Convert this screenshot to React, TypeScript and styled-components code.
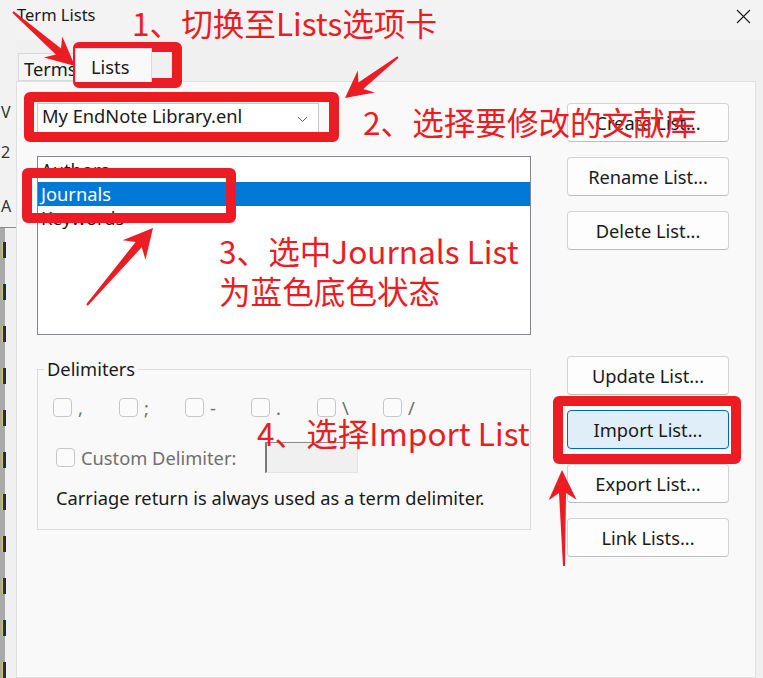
import React from 'react';
import styled, { createGlobalStyle } from 'styled-components';

const UI_FONT = `"Noto Sans", "Segoe UI", sans-serif`;
const CJK_FONT = `"Noto Sans CJK SC", "Noto Sans", sans-serif`;
const RED = '#ec1c24';
const FS = '18.3px';

const Global = createGlobalStyle`
  html, body { margin: 0; padding: 0; background: #f0f0f0; }
  body { font-family: ${UI_FONT}; color: #1a1a1a; }
  * { box-sizing: border-box; }
`;

const Screen = styled.div`
  position: relative;
  width: 763px;
  height: 678px;
  overflow: hidden;
  display: flex;
  background: #f0f0f0;
`;

const BehindStrip = styled.div`
  width: 16px;
  flex: none;
  display: flex;
  flex-direction: column;
`;

const StripTop = styled.div`
  height: 237px;
  background: #f2f2f2;
  border-bottom: 1px solid #8c8c8c;
  display: flex;
  flex-direction: column;
  padding: 104px 0 0 1px;
  overflow: hidden;
`;

const Frag = styled.span<{ $gap: number }>`
  margin-top: ${p => p.$gap}px;
  font-size: 16px;
  line-height: 16px;
  color: #333;
`;

const StripBottom = styled.div`
  flex: 1;
  background: #f0f0f0;
  border-left: 5px solid #a9a9a9;
  display: flex;
  flex-direction: column;
  gap: 26px;
  padding-top: 14px;
`;

const Mark = styled.div`
  width: 3px;
  height: 16px;
  margin-left: -2px;
  background: #1d2a55;
  box-shadow: -1px 0 0 #d9c94a;
`;

const Dialog = styled.div`
  flex: 1;
  display: flex;
  flex-direction: column;
  min-width: 0;
`;

const TitleBar = styled.div`
  height: 40px;
  flex: none;
  display: flex;
  justify-content: space-between;
  align-items: flex-start;
  padding: 4px 12px 0 1px;
  background: #f3f3f3;
`;

const Title = styled.div`
  font-size: 16.5px;
  line-height: 22px;
  color: #1a1a1a;
`;

const Close = styled.svg`
  margin-top: 5px;
`;

const TabRow = styled.div`
  height: 41px;
  flex: none;
  display: flex;
  align-items: flex-end;
  padding-left: 2px;
`;

const Tab = styled.div<{ $active?: boolean }>`
  position: relative;
  height: ${p => (p.$active ? 34 : 28)}px;
  width: ${p => (p.$active ? 77 : 58)}px;
  margin-bottom: ${p => (p.$active ? -1 : 0)}px;
  margin-left: ${p => (p.$active ? -1 : 0)}px;
  padding: ${p => (p.$active ? '6px 0 0 15px' : '3px 0 0 5px')};
  font-size: ${FS};
  line-height: 24px;
  white-space: nowrap;
  overflow: hidden;
  background: ${p => (p.$active ? '#f9f9f9' : '#f4f4f4')};
  border: 1px solid #dadada;
  border-bottom: ${p => (p.$active ? 'none' : '1px solid #dadada')};
  z-index: ${p => (p.$active ? 1 : 0)};
`;

const Panel = styled.div`
  flex: 1;
  width: 740px;
  background: #f9f9f9;
  border: 1px solid #e0e0e0;
  display: flex;
  gap: 36px;
  padding: 21px 0 0 20px;
`;

const LeftCol = styled.div`
  width: 494px;
  display: flex;
  flex-direction: column;
`;

const Select = styled.div`
  width: 282px;
  height: 31px;
  display: flex;
  justify-content: space-between;
  background: #ffffff;
  border: 1px solid #c9c9c9;
  padding: 0 10px 0 4px;
  font-size: ${FS};
  line-height: 24px;
`;

const Chevron = styled.svg`
  margin-top: 12px;
`;

const ListBox = styled.div`
  margin-top: 22px;
  height: 179px;
  background: #ffffff;
  border: 1px solid #828790;
  padding-top: 1px;
  display: flex;
  flex-direction: column;
`;

const ListItem = styled.div<{ $selected?: boolean }>`
  height: 24px;
  padding-left: 3px;
  font-size: ${FS};
  line-height: 24px;
  color: ${p => (p.$selected ? '#ffffff' : '#1a1a1a')};
  background: ${p => (p.$selected ? '#0078d7' : 'transparent')};
`;

const Group = styled.fieldset`
  margin: 22px 0 0 0;
  border: 1px solid #dcdcdc;
  padding: 17px 10px 19px 15px;
  min-width: 0;
`;

const Legend = styled.legend`
  margin-left: -9px;
  padding: 0 3px;
  font-size: ${FS};
  line-height: 24px;
  color: #1a1a1a;
`;

const CheckRow = styled.div`
  display: flex;
  height: 19px;
`;

const CheckItem = styled.div`
  width: 66px;
  display: flex;
  align-items: center;
  gap: 6px;
`;

const Box = styled.div`
  width: 19px;
  height: 19px;
  flex: none;
  border: 1px solid #c6c6c6;
  border-radius: 4px;
  background: #fbfbfb;
`;

const DisabledText = styled.span`
  font-size: ${FS};
  line-height: 19px;
  color: #6f6f6f;
`;

const CustomRow = styled.div`
  margin-top: 25px;
  height: 31px;
  display: flex;
  align-items: center;
  padding-left: 3px;
`;

const CustomLabel = styled.div`
  width: 209px;
  display: flex;
  align-items: center;
  gap: 6px;
  font-size: ${FS};
  line-height: 24px;
  color: #6f6f6f;
`;

const TextField = styled.div`
  width: 93px;
  height: 31px;
  background: #f0f0f0;
  border: 1px solid #e2e2e2;
  border-top-color: #8a8a8a;
  border-left: 2px solid #7a7a7a;
`;

const Note = styled.div`
  margin-top: 13px;
  padding-left: 3px;
  font-size: ${FS};
  line-height: 24px;
  color: #1a1a1a;
`;

const RightCol = styled.div`
  width: 162px;
  display: flex;
  flex-direction: column;
  gap: 15px;
`;

const Button = styled.div<{ $primary?: boolean; $gapBefore?: number }>`
  height: 39px;
  margin-top: ${p => p.$gapBefore ?? 0}px;
  display: flex;
  align-items: center;
  justify-content: center;
  font-size: ${FS};
  line-height: 24px;
  color: #1a1a1a;
  border-radius: 4px;
  background: ${p => (p.$primary ? '#e0eef9' : '#fdfdfd')};
  border: 1px solid ${p => (p.$primary ? '#0067c0' : '#d3d3d3')};
  border-bottom-color: ${p => (p.$primary ? '#0067c0' : '#bdbdbd')};
`;

/* ---------- annotation overlay ---------- */

const Overlay = styled.svg`
  position: absolute;
  left: 0;
  top: 0;
  pointer-events: none;
`;

const Frame = styled.div<{ $x: number; $y: number; $w: number; $h: number }>`
  position: absolute;
  left: ${p => p.$x}px;
  top: ${p => p.$y}px;
  width: ${p => p.$w}px;
  height: ${p => p.$h}px;
  border: 10px solid ${RED};
  border-radius: 6px;
  pointer-events: none;
`;

const Callout = styled.div<{ $x: number; $y: number }>`
  position: absolute;
  left: ${p => p.$x}px;
  top: ${p => p.$y}px;
  font-family: ${CJK_FONT};
  font-size: 31.6px;
  line-height: 40px;
  color: ${RED};
  white-space: nowrap;
  pointer-events: none;
`;

function arrow(x0: number, y0: number, x1: number, y1: number, headLen = 29, headHalf = 14, shaftHalf = 4, notch = 7) {
  const dx = x1 - x0;
  const dy = y1 - y0;
  const L = Math.hypot(dx, dy);
  const ux = dx / L;
  const uy = dy / L;
  const nx = -uy;
  const ny = ux;
  const at = (d: number, w: number) => `${(x0 + ux * d + nx * w).toFixed(1)},${(y0 + uy * d + ny * w).toFixed(1)}`;
  return [
    at(0, 1),
    at(L - headLen + notch, shaftHalf),
    at(L - headLen, headHalf),
    at(L, 0),
    at(L - headLen, -headHalf),
    at(L - headLen + notch, -shaftHalf),
    at(0, -1),
  ].join(' ');
}

const delimiters = [',', ';', '-', '.', '\\', '/'];

export default function App() {
  return (
    <>
      <Global />
      <Screen>
        <BehindStrip>
          <StripTop>
            <Frag $gap={0}>V</Frag>
            <Frag $gap={24}>2</Frag>
            <Frag $gap={38}>A</Frag>
          </StripTop>
          <StripBottom>
            {Array.from({ length: 11 }).map((_, i) => (
              <Mark key={i} />
            ))}
          </StripBottom>
        </BehindStrip>
        <Dialog>
          <TitleBar>
            <Title>Term Lists</Title>
            <Close width="15" height="15" viewBox="0 0 15 15">
              <path d="M1 1 L14 14 M14 1 L1 14" stroke="#1a1a1a" strokeWidth="1.1" fill="none" />
            </Close>
          </TitleBar>
          <TabRow>
            <Tab>Terms</Tab>
            <Tab $active>Lists</Tab>
          </TabRow>
          <Panel>
            <LeftCol>
              <Select>
                <span>My EndNote Library.enl</span>
                <Chevron width="11" height="7" viewBox="0 0 11 7">
                  <path d="M1 1 L5.5 5.5 L10 1" stroke="#5a5a5a" strokeWidth="1" fill="none" />
                </Chevron>
              </Select>
              <ListBox>
                <ListItem>Authors</ListItem>
                <ListItem $selected>Journals</ListItem>
                <ListItem>Keywords</ListItem>
              </ListBox>
              <Group>
                <Legend>Delimiters</Legend>
                <CheckRow>
                  {delimiters.map(d => (
                    <CheckItem key={d}>
                      <Box />
                      <DisabledText>{d}</DisabledText>
                    </CheckItem>
                  ))}
                </CheckRow>
                <CustomRow>
                  <CustomLabel>
                    <Box />
                    <span>Custom Delimiter:</span>
                  </CustomLabel>
                  <TextField />
                </CustomRow>
                <Note>Carriage return is always used as a term delimiter.</Note>
              </Group>
            </LeftCol>
            <RightCol>
              <Button>Create List...</Button>
              <Button>Rename List...</Button>
              <Button>Delete List...</Button>
              <Button $gapBefore={91}>Update List...</Button>
              <Button $primary>Import List...</Button>
              <Button>Export List...</Button>
              <Button>Link Lists...</Button>
            </RightCol>
          </Panel>
        </Dialog>

        <Frame $x={73} $y={42} $w={109} $h={46} />
        <Frame $x={24} $y={92} $w={315} $h={50} />
        <Frame $x={22} $y={168} $w={214} $h={55} />
        <Frame $x={553} $y={396} $w={188} $h={68} />

        <Overlay width="763" height="678" viewBox="0 0 763 678">
          <polygon points={arrow(13, 12, 75, 66)} fill={RED} />
          <polygon points={arrow(398, 57, 345, 98, 27, 14, 4, 7)} fill={RED} />
          <polygon points={arrow(87, 305, 153, 228, 29, 15, 4, 7)} fill={RED} />
          <polygon points={arrow(564, 566, 562, 470, 30, 14, 3.5, 7)} fill={RED} />
        </Overlay>

        <Callout $x={132} $y={2}>1、切换至Lists选项卡</Callout>
        <Callout $x={363} $y={101}>2、选择要修改的文献库</Callout>
        <Callout $x={219} $y={230}>
          3、选中Journals List
          <br />
          为蓝色底色状态
        </Callout>
        <Callout $x={257} $y={412}>4、选择Import List</Callout>
      </Screen>
    </>
  );
}
